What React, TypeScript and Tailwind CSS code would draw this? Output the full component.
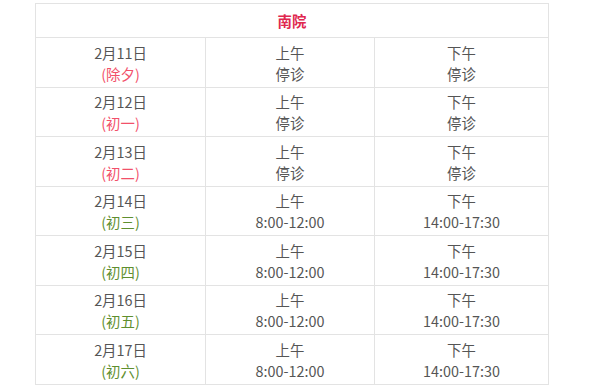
const rows = [
  { date: "2月11日", lunar: "除夕", holiday: true },
  { date: "2月12日", lunar: "初一", holiday: true },
  { date: "2月13日", lunar: "初二", holiday: true },
  { date: "2月14日", lunar: "初三", holiday: false },
  { date: "2月15日", lunar: "初四", holiday: false },
  { date: "2月16日", lunar: "初五", holiday: false },
  { date: "2月17日", lunar: "初六", holiday: false },
];

export default function App() {
  return (
    <div
      className="h-[388px] w-[600px] bg-white pt-[3px] pl-[35px] text-[14.4px] leading-[21px] text-[#555]"
      style={{ fontFamily: '"Noto Sans CJK SC", "Noto Sans", sans-serif' }}
    >
      <table className="w-[514px] table-fixed border-collapse border border-[#e3e3e3]">
        <colgroup>
          <col className="w-[170px]" />
          <col className="w-[169px]" />
          <col />
        </colgroup>
        <thead>
          <tr className="h-[34px]">
            <th colSpan={3} className="border border-[#e3e3e3] text-center font-bold text-[#e0284f]">
              南院
            </th>
          </tr>
        </thead>
        <tbody>
          {rows.map((row) => (
            <tr key={row.date} className="h-[49.5px]">
              <td className="border border-[#e3e3e3] pt-[1px] text-center">
                <div>{row.date}</div>
                <div className={row.holiday ? "text-[#f2506a]" : "text-[#5f8f2f]"}>({row.lunar})</div>
              </td>
              <td className="border border-[#e3e3e3] pt-[1px] text-center">
                <div>上午</div>
                <div>{row.holiday ? "停诊" : "8:00-12:00"}</div>
              </td>
              <td className="border border-[#e3e3e3] pt-[1px] text-center">
                <div>下午</div>
                <div>{row.holiday ? "停诊" : "14:00-17:30"}</div>
              </td>
            </tr>
          ))}
        </tbody>
      </table>
    </div>
  );
}
